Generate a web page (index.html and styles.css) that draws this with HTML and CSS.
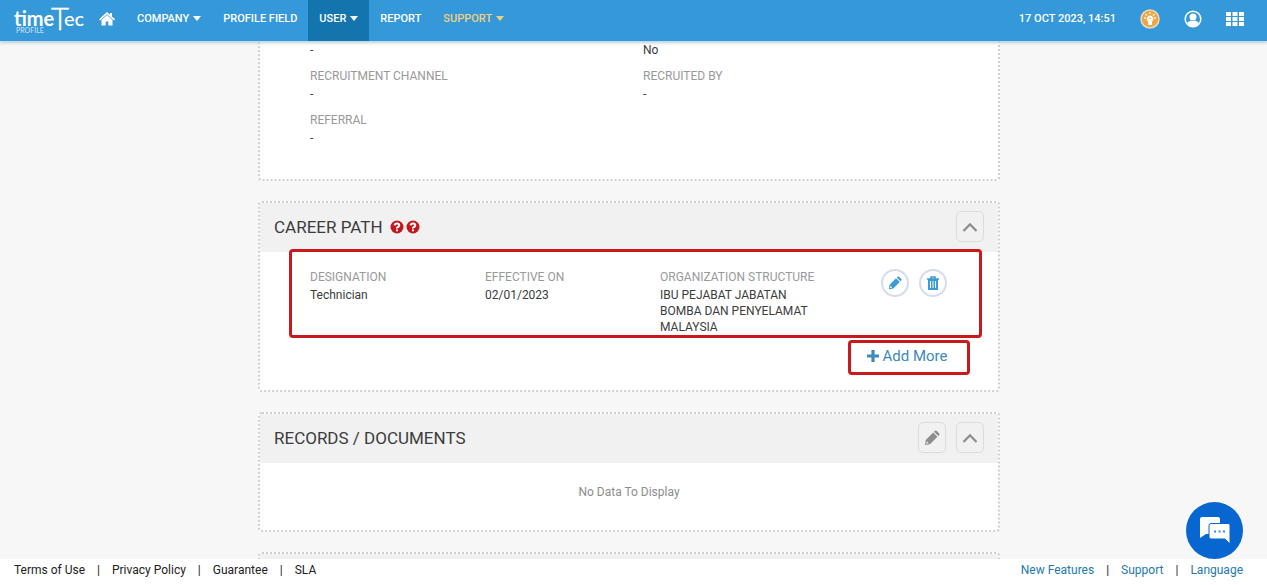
FILE: index.html
```html
<!DOCTYPE html>
<html lang="en">
<head>
<meta charset="utf-8">
<title>TimeTec Profile</title>
<link rel="stylesheet" href="styles.css">
</head>
<body>
<svg class="sprite" aria-hidden="true">
  <symbol id="pencil" viewBox="0 0 16 16">
    <path fill="currentColor" fill-rule="evenodd" d="M1 15l.8-5 7.400-7.400 4.200 4.200L6 14.200zM10 1.800l1-1q.8-.6 1.600 0l2.600 2.600q.6.8 0 1.600l-1 1zM2.800 11.200L2.300 13.700 4.800 13.200z"/>
  </symbol>
  <symbol id="chevron" viewBox="0 0 16 16">
    <path fill="none" stroke="currentColor" stroke-width="2.300" d="M1.500 12L8 5.300 14.500 12"/>
  </symbol>
  <symbol id="help" viewBox="0 0 14 14">
    <circle cx="7" cy="7" r="6.500" fill="#c4161c"/>
    <path fill="none" stroke="#fff" stroke-width="2" d="M4.600 5.400Q4.900 3.500 7 3.500T9.300 5.300Q9.300 6.300 8 7T7 8.600M7 9.500V11.300"/>
  </symbol>
</svg>

<header class="topbar">
  <a class="logo" href="#" aria-label="timeTec Profile">
    <svg width="72" height="38" viewBox="0 0 72 38">
      <g fill="#fff" font-family="Lato, sans-serif">
        <text x="0" y="26" font-size="20" font-weight="700">time</text>
        <text x="37" y="30" font-size="31" font-weight="300" stroke="#fff" stroke-width=".4">T</text>
        <text x="50" y="26" font-size="20">ec</text>
        <text x="2" y="33" font-size="7" opacity=".7">PROFILE</text>
      </g>
    </svg>
  </a>
  <nav class="nav">
    <a class="nav-item" href="#" aria-label="Home">
      <svg width="16" height="14" viewBox="0 0 16 14"><path fill="#fff" d="M8 0l3 2.700V1h2v3.500L16 7.300l-1 1.100L8 2.200 1 8.400 0 7.300zM8 3l5.500 4.900V13.500H9.300V9.500H6.700v4H2.500V7.900z"/></svg>
    </a>
    <a class="nav-item" href="#">COMPANY <span class="caret"></span></a>
    <a class="nav-item" href="#">PROFILE FIELD</a>
    <a class="nav-item active" href="#">USER <span class="caret"></span></a>
    <a class="nav-item" href="#">REPORT</a>
    <a class="nav-item gold" href="#">SUPPORT <span class="caret"></span></a>
  </nav>
  <div class="tools">
    <time class="clock">17 OCT 2023, 14:51</time>
    <a href="#" aria-label="Tips">
      <svg width="20" height="20" viewBox="0 0 20 20"><circle cx="10" cy="10" r="9" fill="#f5a33c" stroke="#e3dccb" stroke-width="1.500"/><path fill="#fff" d="M10 6.500a3.300 3.300 0 0 1 2 5.900V16H8v-3.600a3.300 3.300 0 0 1 2-5.900z"/><path stroke="#fff" stroke-width="1.300" d="M10 3v2M4 9h2M14 9h2M5.500 5L7 6.400M14.500 5L13 6.400"/><path stroke="#f5a33c" d="M9 9.500h2"/></svg>
    </a>
    <a href="#" aria-label="Account">
      <svg width="18" height="18" viewBox="0 0 18 18"><circle cx="9" cy="9" r="7.800" fill="none" stroke="#fff" stroke-width="1.500"/><circle cx="9" cy="7" r="3.500" fill="#fff"/><path fill="#fff" d="M3 13q1.500-2 4-2.500 2 1 4 0 2.500.5 4 2.500-2.500 3.500-6 3.500T3 13z"/></svg>
    </a>
    <a href="#" aria-label="Apps">
      <svg width="18" height="14" viewBox="0 0 18 14"><path fill="#fff" d="M0 0h5v4H0zM6.500 0h5v4h-5zM13 0h5v4h-5zM0 5h5v4H0zM6.500 5h5v4h-5zM13 5h5v4h-5zM0 10h5v4H0zM6.500 10h5v4h-5zM13 10h5v4h-5z"/></svg>
    </a>
  </div>
</header>

<main class="content">
  <section class="card recruitment">
    <div class="column">
      <dl class="field"><dd>-</dd></dl>
      <dl class="field"><dt>RECRUITMENT CHANNEL</dt><dd>-</dd></dl>
      <dl class="field"><dt>REFERRAL</dt><dd>-</dd></dl>
    </div>
    <div class="column">
      <dl class="field"><dd>No</dd></dl>
      <dl class="field"><dt>RECRUITED BY</dt><dd>-</dd></dl>
    </div>
  </section>

  <section class="card">
    <div class="card-head">
      <h2>CAREER PATH</h2>
      <span class="helps">
        <svg width="14" height="14"><use href="#help"/></svg>
        <svg width="14" height="14"><use href="#help"/></svg>
      </span>
      <button class="square" aria-label="Collapse career path"><svg width="16" height="16"><use href="#chevron"/></svg></button>
    </div>
    <div class="record marked">
      <dl class="field"><dt>DESIGNATION</dt><dd>Technician</dd></dl>
      <dl class="field"><dt>EFFECTIVE ON</dt><dd>02/01/2023</dd></dl>
      <dl class="field"><dt>ORGANIZATION STRUCTURE</dt><dd>IBU PEJABAT JABATAN BOMBA DAN PENYELAMAT MALAYSIA</dd></dl>
      <div class="actions">
        <button class="round" aria-label="Edit"><svg width="14" height="14"><use href="#pencil"/></svg></button>
        <button class="round" aria-label="Delete">
          <svg width="12" height="14" viewBox="0 0 12 14"><path fill="none" stroke="currentColor" stroke-width="1.500" d="M0 3h12M4 2.500V1h4v1.500"/><path fill="currentColor" fill-rule="evenodd" d="M1 3h10v11H1zM3 5v7h1V5zM5.500 5v7h1V5zM8 5v7h1V5z"/></svg>
        </button>
      </div>
    </div>
    <button class="add-more marked">
      <svg width="12" height="12" viewBox="0 0 12 12"><path stroke="currentColor" stroke-width="3.200" d="M6 0v12M0 6h12"/></svg>
      Add More
    </button>
  </section>

  <section class="card">
    <div class="card-head">
      <h2>RECORDS / DOCUMENTS</h2>
      <button class="square" aria-label="Edit records"><svg width="16" height="16"><use href="#pencil"/></svg></button>
      <button class="square" aria-label="Collapse records"><svg width="16" height="16"><use href="#chevron"/></svg></button>
    </div>
    <p class="empty">No Data To Display</p>
  </section>

  <section class="card"><div class="card-head"></div></section>
</main>

<footer class="footer">
  <nav class="links">
    <a href="#">Terms of Use</a><span>|</span><a href="#">Privacy Policy</a><span>|</span><a href="#">Guarantee</a><span>|</span><a href="#">SLA</a>
  </nav>
  <nav class="links blue">
    <a href="#">New Features</a><span>|</span><a href="#">Support</a><span>|</span><a href="#">Language</a>
  </nav>
</footer>

<button class="chat" aria-label="Chat">
  <svg width="32" height="28" viewBox="0 0 32 28"><path fill="#fff" d="M3 0h16q2 0 2 2v13q0 2-2 2H7l-6 4V2q0-2 2-2z"/><path fill="#fff" stroke="#0866d0" d="M12 6.500h17q2 0 2 2V27l-5-5H12q-2 0-2-2V8.500q0-2 2-2z"/><path fill="#3d8be0" d="M15 13.500h2v2h-2zM19.500 13.500h2v2h-2zM24 13.500h2v2h-2z"/></svg>
</button>
</body>
</html>
```
FILE: styles.css
```css
* { box-sizing: border-box; }

body {
  margin: 0;
  height: 100vh;
  display: flex;
  flex-direction: column;
  overflow: hidden;
  background: #f7f7f7;
  color: #3c3c3c;
  font: 12px/16px Roboto, "Liberation Sans", sans-serif;
}

a { color: inherit; text-decoration: none; }
button { font: inherit; padding: 0; cursor: pointer; }
svg { display: block; flex: none; }
.sprite { position: absolute; width: 0; height: 0; }

/* Top bar */
.topbar {
  flex: none;
  height: 41px;
  display: flex;
  z-index: 1;
  padding: 0 23px 0 14px;
  background: #3598d8;
  box-shadow: 0 2px 3px #b9d0e2;
  color: #fff;
  font-size: 11px;
  font-weight: 500;
}
.logo { width: 74px; }
.nav { display: flex; }
.nav-item {
  display: flex;
  align-items: center;
  gap: 4px;
  padding: 0 11px 4px;
}
.active { background: #1474ae; }
.gold { color: #f0d080; }
.caret {
  border: 4px solid transparent;
  border-top: 5px solid currentColor;
  border-bottom: 0;
}
.tools {
  margin-left: auto;
  display: flex;
  align-items: center;
  gap: 24px;
  padding-bottom: 3px;
}

/* Cards */
.content {
  flex: 1;
  min-height: 0;
  overflow: hidden;
  display: flex;
  flex-direction: column;
  align-items: center;
  gap: 20px;
  padding-right: 9px;
}
.card {
  flex: none;
  width: 742px;
  max-width: 100%;
  border: 2px dotted #cfcfcf;
  border-radius: 4px;
  background: #fff;
}
.card-head {
  display: flex;
  align-items: center;
  gap: 10px;
  min-height: 49px;
  padding: 8px 14px 10px;
  background: #f1f1f1;
}
h2 { margin: 0 auto 0 0; font-size: 17px; line-height: 24px; font-weight: 400; }
h2:has(+ .helps) { margin-right: -3px; }
.helps { display: flex; gap: 2px; margin-right: auto; }
.square {
  display: grid;
  place-items: center;
  width: 28px;
  height: 31px;
  border: 1px solid #dcdcdc;
  border-radius: 5px;
  background: transparent;
  color: #8d8d8d;
}

.recruitment {
  display: grid;
  grid-template-columns: 1fr 1fr;
  border-top: 0;
  border-radius: 0 0 4px 4px;
  padding: 1px 22px 33px 50px;
}
.column { display: flex; flex-direction: column; gap: 8px; }
.field { margin: 0; }
.field dt { color: #999; line-height: 20px; }
.field dd { margin: 0; }

.marked { outline: 3px solid #c9191b; border-radius: 1px; }
.record {
  display: grid;
  grid-template-columns: 175px 175px 1fr 67px;
  margin: 0 19px 0 32px;
  padding: 15px 32px 0 18px;
}
.record dd { max-width: 160px; }
.record dt { white-space: nowrap; }
.actions { display: flex; justify-content: flex-end; gap: 10px; padding-top: 2px; }
.round {
  display: grid;
  place-items: center;
  width: 28px;
  height: 28px;
  border: 2px solid #d6dcee;
  border-radius: 50%;
  background: #fff;
  color: #3b9bd6;
}
.add-more {
  display: flex;
  align-items: center;
  justify-content: center;
  gap: 4px;
  width: 116px;
  height: 29px;
  margin: 8px 31px 18px auto;
  padding: 0 4px 3px 0;
  border: 0;
  background: #fff;
  color: #3d8ab8;
  font-size: 15px;
}
.empty { margin: 0; padding: 20px 0 29px; text-align: center; line-height: 18px; color: #8d8d8d; }

/* Footer */
.footer {
  flex: none;
  display: flex;
  justify-content: space-between;
  padding: 3px 24px 7px 14px;
  background: #fff;
  color: #222;
}
.links { display: flex; gap: 12px; }
.blue a { color: #2379ae; }

.chat {
  position: fixed;
  right: 24px;
  bottom: 26px;
  z-index: 2;
  display: grid;
  place-items: center;
  width: 57px;
  height: 57px;
  border: 0;
  border-radius: 50%;
  background: #0866d0;
}
```
